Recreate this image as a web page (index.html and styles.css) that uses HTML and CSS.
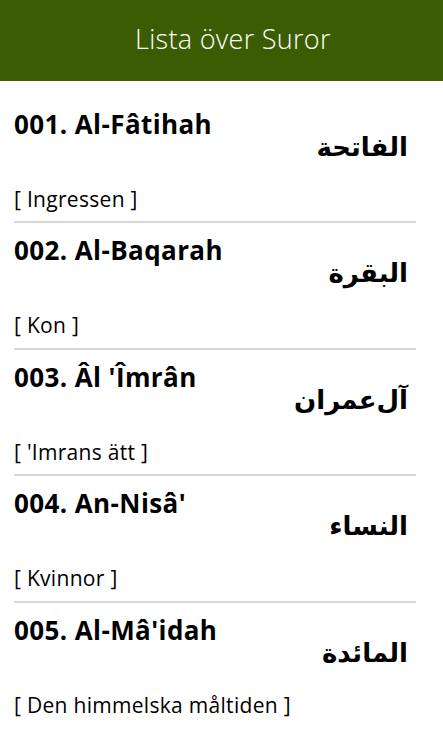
FILE: index.html
```html
<!DOCTYPE html>
<html lang="sv">
<head>
<meta charset="utf-8">
<link rel="stylesheet" href="styles.css">
</head>
<body>
<header class="bar"><h1 class="bar-title">Lista över Suror</h1></header>
<ul class="list">
  <li class="item">
    <div class="name">001. Al-Fâtihah</div>
    <div class="arabic" lang="ar" dir="rtl">الفاتحة</div>
    <div class="meaning">[ Ingressen ]</div>
  </li>
  <li class="item">
    <div class="name">002. Al-Baqarah</div>
    <div class="arabic" lang="ar" dir="rtl">البقرة</div>
    <div class="meaning">[ Kon ]</div>
  </li>
  <li class="item">
    <div class="name">003. Âl 'Îmrân</div>
    <div class="arabic" lang="ar" dir="rtl">آل‌عمران</div>
    <div class="meaning">[ 'Imrans ätt ]</div>
  </li>
  <li class="item">
    <div class="name">004. An-Nisâ'</div>
    <div class="arabic" lang="ar" dir="rtl">النساء</div>
    <div class="meaning">[ Kvinnor ]</div>
  </li>
  <li class="item">
    <div class="name">005. Al-Mâ'idah</div>
    <div class="arabic" lang="ar" dir="rtl">المائدة</div>
    <div class="meaning">[ Den himmelska måltiden ]</div>
  </li>
</ul>
</body>
</html>
```
FILE: styles.css
```css
html, body {
  margin: 0;
  padding: 0;
  background: #ffffff;
  height: 738px;
  overflow: hidden;
}
body {
  font-family: "Open Sans", "Noto Sans", sans-serif;
  color: #000;
}
.bar {
  background: #3b5c02;
  height: 81px;
  display: flex;
  align-items: center;
  padding-left: 135px;
  box-sizing: border-box;
}
.bar-title {
  margin: 0;
  color: #ffffff;
  font-weight: 300;
  font-size: 27px;
  letter-spacing: 0.3px;
  line-height: 30px;
  padding-bottom: 4px;
}
.list {
  list-style: none;
  margin: 0;
  padding: 16px 27px 0 14px;
}
.item {
  display: flex;
  flex-direction: column;
  border-bottom: 2px solid #d6d6d6;
  padding-top: 12px;
  height: 112.4px;
}
.item:last-child {
  border-bottom: none;
}
.name {
  font-weight: 700;
  font-size: 26px;
  letter-spacing: 0.4px;
  line-height: 30px;
}
.arabic {
  font-family: "DejaVu Sans", sans-serif;
  font-weight: 700;
  font-size: 26px;
  line-height: 36px;
  text-align: right;
  padding-right: 8px;
  margin-top: -10px;
}
.meaning {
  font-size: 21px;
  letter-spacing: 0.3px;
  line-height: 28px;
  margin-top: 20px;
}
```
